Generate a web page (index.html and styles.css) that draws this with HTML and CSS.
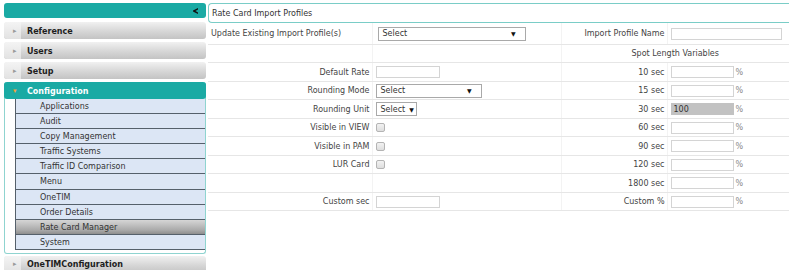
FILE: index.html
```html
<!DOCTYPE html>
<html lang="en">
<head>
    <meta charset="UTF-8">
    <title>Rate Card Import Profiles</title>
    <link rel="stylesheet" href="styles.css">
</head>
<body>
    <div class="page">
        <!-- left navigation -->
        <aside class="sidebar">
            <div class="sidebar-top">
                <svg class="collapse" width="5" height="6" viewBox="0 0 5 6"><polygon points="5,0 5,1.6 2.4,3 5,4.4 5,6 0,3.4 0,2.6" fill="#111"/></svg>
            </div>

            <div class="menu-head"><span class="arrow">&#9656;</span><span class="label">Reference</span></div>
            <div class="menu-head"><span class="arrow">&#9656;</span><span class="label">Users</span></div>
            <div class="menu-head"><span class="arrow">&#9656;</span><span class="label">Setup</span></div>

            <div class="menu-group">
                <div class="menu-head open"><span class="arrow">&#9662;</span><span class="label">Configuration</span></div>
                <ul class="submenu">
                    <li>Applications</li>
                    <li>Audit</li>
                    <li>Copy Management</li>
                    <li>Traffic Systems</li>
                    <li>Traffic ID Comparison</li>
                    <li>Menu</li>
                    <li>OneTIM</li>
                    <li>Order Details</li>
                    <li class="current">Rate Card Manager</li>
                    <li>System</li>
                </ul>
            </div>

            <div class="menu-head last"><span class="arrow">&#9656;</span><span class="label">OneTIMConfiguration</span></div>
        </aside>

        <!-- rate card form -->
        <main class="content">
            <div class="title">Rate Card Import Profiles</div>

            <table class="form">
                <colgroup>
                    <col class="c1"><col class="c2"><col class="c3"><col class="c4">
                </colgroup>
                <tr class="first">
                    <td class="lead">Update Existing Import Profile(s)</td>
                    <td><span class="select wide">Select</span></td>
                    <td class="lbl">Import Profile Name</td>
                    <td><input class="txt name" type="text"></td>
                </tr>
                <tr>
                    <td></td>
                    <td></td>
                    <td class="center" colspan="2">Spot Length Variables</td>
                </tr>
                <tr>
                    <td class="lbl">Default Rate</td>
                    <td><input class="txt short" type="text"></td>
                    <td class="lbl">10 sec</td>
                    <td><input class="txt pct" type="text"><span class="unit">%</span></td>
                </tr>
                <tr>
                    <td class="lbl">Rounding Mode</td>
                    <td><span class="select mid">Select</span></td>
                    <td class="lbl">15 sec</td>
                    <td><input class="txt pct" type="text"><span class="unit">%</span></td>
                </tr>
                <tr>
                    <td class="lbl">Rounding Unit</td>
                    <td><span class="select small">Select</span></td>
                    <td class="lbl">30 sec</td>
                    <td><input class="txt pct locked" type="text" value="100" readonly><span class="unit">%</span></td>
                </tr>
                <tr>
                    <td class="lbl">Visible in VIEW</td>
                    <td><input class="check" type="checkbox"></td>
                    <td class="lbl">60 sec</td>
                    <td><input class="txt pct" type="text"><span class="unit">%</span></td>
                </tr>
                <tr>
                    <td class="lbl">Visible in PAM</td>
                    <td><input class="check" type="checkbox"></td>
                    <td class="lbl">90 sec</td>
                    <td><input class="txt pct" type="text"><span class="unit">%</span></td>
                </tr>
                <tr>
                    <td class="lbl">LUR Card</td>
                    <td><input class="check" type="checkbox"></td>
                    <td class="lbl">120 sec</td>
                    <td><input class="txt pct" type="text"><span class="unit">%</span></td>
                </tr>
                <tr>
                    <td></td>
                    <td></td>
                    <td class="lbl">1800 sec</td>
                    <td><input class="txt pct" type="text"><span class="unit">%</span></td>
                </tr>
                <tr>
                    <td class="lbl">Custom sec</td>
                    <td><input class="txt short" type="text"></td>
                    <td class="lbl">Custom %</td>
                    <td><input class="txt pct" type="text"><span class="unit">%</span></td>
                </tr>
            </table>
        </main>
    </div>
</body>
</html>
```

FILE: styles.css
```css
/* reset */
* {
    margin: 0;
    padding: 0;
    box-sizing: border-box;
}

body {
    font-family: 'DejaVu Sans', Verdana, sans-serif;
    font-size: 8px;
    color: #444;
    background: #fff;
}

.page {
    display: flex;
    align-items: flex-start;
    padding: 3px 0 0 4px;
}

/* sidebar */
.sidebar {
    width: 202px;
    flex-shrink: 0;
}

.sidebar-top {
    height: 15px;
    margin-bottom: 4px;
    background: #1aaaa4;
    border-radius: 3px;
    display: flex;
    align-items: center;
    justify-content: flex-end;
    padding-right: 8px;
}

.menu-head {
    height: 17px;
    margin-bottom: 3px;
    display: flex;
    align-items: center;
    border-radius: 3px;
    background: linear-gradient(#f1f1f1, #d6d6d6 55%, #c3c3c3);
    font-weight: bold;
    color: #1e1e1e;
}

.menu-head .arrow {
    width: 17px;
    height: 100%;
    display: flex;
    align-items: center;
    padding-left: 9px;
    font-size: 7px;
    color: #9a9a9a;
    background: linear-gradient(#f4f4f4, #e2e2e2);
    border-radius: 3px 0 0 3px;
    margin-right: 6px;
}

.menu-head .label {
    padding-top: 1px;
}

.menu-head.last {
    margin: 2px 0 0;
}

/* open group */
.menu-group {
    border: 1px solid #8fd4d0;
    border-top: none;
    border-radius: 3px;
    padding-bottom: 3px;
}

.menu-head.open {
    margin: 0 -1px;
    background: #1aaaa4;
    color: #fff;
}

.menu-head.open .arrow {
    background: none;
    color: #f3a23a;
}

.submenu {
    list-style: none;
    margin: 0 0 0 10px;
}

.submenu li {
    height: 15.1px;
    line-height: 13px;
    padding: 1px 0 0 24px;
    background: #dce6f5;
    border-left: 1px solid #55606b;
    border-bottom: 1px solid #55606b;
    color: #333;
}

.submenu li.current {
    background: linear-gradient(#d6d6d6, #ababab 70%, #8e8e8e);
}

/* content */
.content {
    flex: 1;
    margin-left: 2px;
}

.title {
    height: 20px;
    line-height: 16px;
    padding: 2px 0 0 3px;
    border: 1px solid #7acdc7;
    border-right: none;
    border-radius: 4px 0 0 4px;
    color: #333;
}

.form {
    width: 581px;
    border-collapse: collapse;
    table-layout: fixed;
}

.form .c1 { width: 164px; }
.form .c2 { width: 189px; }
.form .c3 { width: 106px; }
.form .c4 { width: 122px; }

.form td {
    height: 18.5px;
    padding: 1px 0 0 5px;
    border-bottom: 1px solid #e6e6e6;
    border-left: 1px solid #f3f3f3;
    vertical-align: middle;
    white-space: nowrap;
}

.form td:first-child {
    border-left: none;
}

.form tr.first td {
    height: 21px;
}

.form td.lead {
    padding-left: 3px;
}

.form td.lbl {
    text-align: right;
    padding-right: 2px;
    padding-left: 0;
}

.form td.lbl + td {
    padding-left: 3px;
}

.form td.center {
    text-align: center;
    padding-left: 0;
}

/* controls */
.txt {
    height: 12px;
    border: 1px solid #d4d4d4;
    background: #fff;
    font: inherit;
    color: #333;
    padding: 0 2px;
    vertical-align: middle;
    outline: none;
}

.txt.short { width: 64px; }
.txt.name { width: 111px; }
.txt.pct { width: 63px; }

.txt.locked {
    background: #c2c2c2;
    border-color: #c2c2c2;
}

.unit {
    margin-left: 2px;
    color: #8a8a8a;
    vertical-align: middle;
}

.select {
    display: inline-flex;
    align-items: center;
    justify-content: space-between;
    height: 14px;
    padding: 0 5px 0 4px;
    border: 1px solid #a9a9a9;
    background: #fff;
    color: #333;
    vertical-align: middle;
}

.select::after {
    content: '\25BC';
    font-size: 6px;
    color: #111;
}

.select.wide { width: 148px; padding-right: 9px; }
.select.mid { width: 106px; padding-right: 9px; }
.select.small { width: 41px; gap: 4px; }

.check {
    appearance: none;
    width: 9px;
    height: 9px;
    border: 1px solid #b4b4b4;
    border-radius: 2px;
    background: linear-gradient(#f2f2f2, #dedede);
    vertical-align: middle;
}
```
